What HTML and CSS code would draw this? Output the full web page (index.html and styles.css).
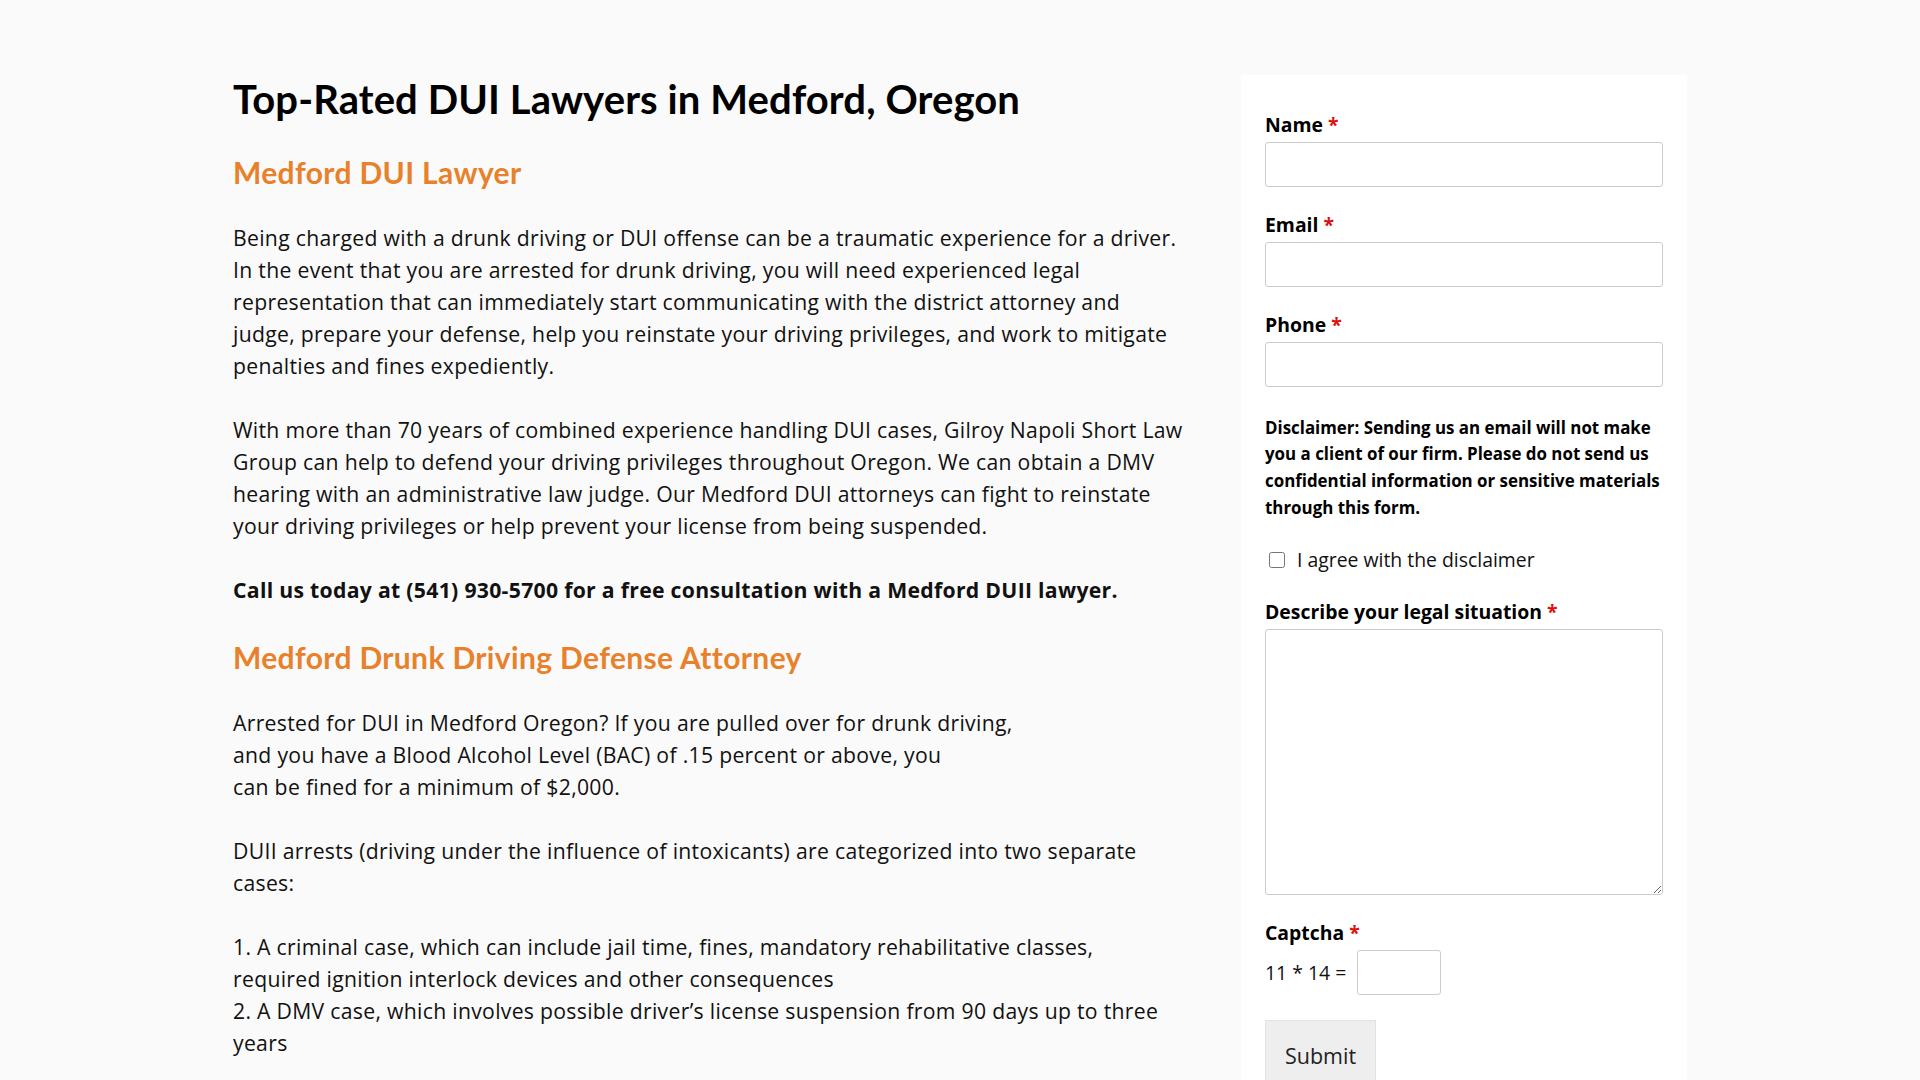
FILE: index.html
```html
<!DOCTYPE html>
<html lang="en">
<head>
<meta charset="utf-8">
<title>Top-Rated DUI Lawyers in Medford, Oregon</title>
<link rel="stylesheet" href="styles.css">
</head>
<body>
<div class="page">
  <main class="content">
    <h1 class="title">Top-Rated DUI Lawyers in Medford, Oregon</h1>
    <h2 class="subtitle">Medford DUI Lawyer</h2>
    <p>Being charged with a drunk driving or DUI offense can be a traumatic experience for a driver. In the event that you are arrested for drunk driving, you will need experienced legal representation that can immediately start communicating with the district attorney and judge, prepare your defense, help you reinstate your driving privileges, and work to mitigate penalties and fines expediently.</p>
    <p>With more than 70 years of combined experience handling DUI cases, Gilroy Napoli Short Law Group can help to defend your driving privileges throughout Oregon. We can obtain a DMV hearing with an administrative law judge. Our Medford DUI attorneys can fight to reinstate your driving privileges or help prevent your license from being suspended.</p>
    <p class="strong">Call us today at (541) 930-5700 for a free consultation with a Medford DUII lawyer.</p>
    <h2 class="subtitle second">Medford Drunk Driving Defense Attorney</h2>
    <p>Arrested for DUI in Medford Oregon? If you are pulled over for drunk driving,<br>and you have a Blood Alcohol Level (BAC) of .15 percent or above, you<br>can be fined for a minimum of $2,000.</p>
    <p>DUII arrests (driving under the influence of intoxicants) are categorized into two separate cases:</p>
    <p>1. A criminal case, which can include jail time, fines, mandatory rehabilitative classes, required ignition interlock devices and other consequences<br>2. A DMV case, which involves possible driver’s license suspension from 90 days up to three years</p>
  </main>
  <aside class="sidebar">
    <form class="form">
      <div class="field">
        <label class="label">Name <span class="req">*</span></label>
        <input class="input" type="text">
      </div>
      <div class="field">
        <label class="label">Email <span class="req">*</span></label>
        <input class="input" type="email">
      </div>
      <div class="field">
        <label class="label">Phone <span class="req">*</span></label>
        <input class="input" type="tel">
      </div>
      <p class="disclaimer">Disclaimer: Sending us an email will not make you a client of our firm. Please do not send us confidential information or sensitive materials through this form.</p>
      <label class="agree"><input type="checkbox" class="check"><span>I agree with the disclaimer</span></label>
      <div class="field">
        <label class="label">Describe your legal situation <span class="req">*</span></label>
        <textarea class="textarea"></textarea>
      </div>
      <div class="field captcha">
        <label class="label">Captcha <span class="req">*</span></label>
        <div class="captcha-row">
          <span class="sum">11 * 14 =</span>
          <input class="input small" type="text">
        </div>
      </div>
      <button type="button" class="submit">Submit</button>
    </form>
  </aside>
</div>
</body>
</html>
```

FILE: styles.css
```css
* { box-sizing: border-box; }
html, body { margin: 0; padding: 0; }
body {
  background: #fafafa;
  color: #111;
  font-family: "Open Sans", "Liberation Sans", sans-serif;
  overflow: hidden;
  height: 1080px;
}
.page {
  width: 1454px;
  margin: 0 auto;
  padding-top: 75px;
  display: flex;
  gap: 56px;
  align-items: flex-start;
}
.content {
  width: 952px;
  flex: none;
}
.title {
  font-family: Lato, "Noto Sans", sans-serif;
  font-weight: 700;
  font-size: 40px;
  line-height: 48px;
  margin: 0 0 31px;
  color: #000;
  letter-spacing: 0.1px;
}
.subtitle {
  font-family: Lato, "Noto Sans", sans-serif;
  font-weight: 700;
  font-size: 30px;
  line-height: 36px;
  margin: 0 0 31.5px;
  color: #e8812a;
  letter-spacing: 0.35px;
}
.content p {
  font-size: 21.2px;
  line-height: 32px;
  margin: 0 0 32px;
  letter-spacing: 0.3px;
}
.content p.strong { font-weight: 700; margin-bottom: 33.5px; letter-spacing: 0.3px; }
.sidebar {
  width: 446px;
  flex: none;
  background: #fff;
  min-height: 1100px;
  padding: 36px 24px 0;
}
.form { display: flex; flex-direction: column; }
.field { display: flex; flex-direction: column; margin-bottom: 24px; }
.label {
  font-weight: 700;
  font-size: 19.4px;
  line-height: 27px;
  margin-bottom: 4px;
  color: #000;
}
.req { color: #e01010; }
.input {
  height: 45px;
  width: 100%;
  border: 1px solid #ccc;
  border-radius: 3px;
  background: #fff;
  font: inherit;
}
.disclaimer {
  margin: 3.5px 0 25px;
  font-weight: 700;
  font-size: 16.9px;
  line-height: 26.7px;
  color: #000;
}
.agree {
  display: flex;
  align-items: center;
  font-size: 19.4px;
  line-height: 27px;
  margin-bottom: 25px;
}
.check {
  width: 16px;
  height: 16px;
  margin: 0 12px 0 4px;
}
.textarea {
  height: 266px;
  width: 100%;
  border: 1px solid #ccc;
  border-radius: 3px;
  resize: vertical;
  font: inherit;
}
.captcha .label { margin-bottom: 4px; }
.captcha-row { display: flex; align-items: center; gap: 11px; }
.sum { font-size: 19.4px; line-height: 27px; }
.input.small { width: 84px; }
.submit {
  align-self: flex-start;
  width: 111px;
  height: 72px;
  margin-top: 1px;
  background: #eee;
  border: 1px solid #e2e2e2;
  font-family: "Open Sans", sans-serif;
  font-size: 21.5px;
  color: #222;
  padding: 0 0 2px;
}
```
